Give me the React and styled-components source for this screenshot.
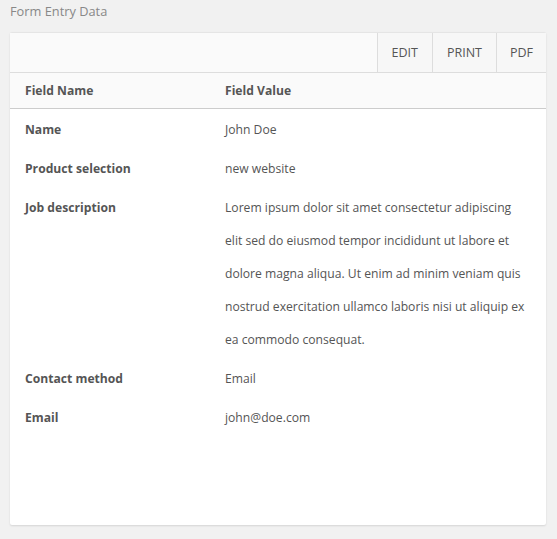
import React from 'react'
import styled, { createGlobalStyle } from 'styled-components'

const GlobalStyle = createGlobalStyle`
  html, body {
    margin: 0;
    padding: 0;
    background: #f1f1f1;
  }
  body {
    font-family: "Open Sans", "Noto Sans", sans-serif;
    font-size: 12.15px;
    color: #555;
  }
`

const entries = [
  { name: 'Name', value: 'John Doe' },
  { name: 'Product selection', value: 'new website' },
  {
    name: 'Job description',
    value:
      'Lorem ipsum dolor sit amet consectetur adipiscing elit sed do eiusmod tempor incididunt ut labore et dolore magna aliqua. Ut enim ad minim veniam quis nostrud exercitation ullamco laboris nisi ut aliquip ex ea commodo consequat.',
  },
  { name: 'Contact method', value: 'Email' },
  { name: 'Email', value: 'john@doe.com' },
]

function App() {
  return (
    <Page>
      <GlobalStyle />
      <Title>Form Entry Data</Title>
      <Card>
        <Toolbar>
          <ToolButton>EDIT</ToolButton>
          <ToolButton>PRINT</ToolButton>
          <ToolButton>PDF</ToolButton>
        </Toolbar>
        <HeadRow>
          <HeadCell>Field Name</HeadCell>
          <HeadCell>Field Value</HeadCell>
        </HeadRow>
        <Body>
          {entries.map((e) => (
            <Row key={e.name}>
              <NameCell>{e.name}</NameCell>
              <ValueCell>{e.value}</ValueCell>
            </Row>
          ))}
        </Body>
      </Card>
    </Page>
  )
}

const Page = styled.div`
  padding: 0 11px 14px 10px;
`

const Title = styled.h2`
  margin: 0;
  padding: 2px 0 0 0;
  height: 30px;
  line-height: 18px;
  font-size: 12.8px;
  font-weight: 400;
  color: #888;
`

const Card = styled.div`
  background: #fff;
  border-radius: 2px;
  box-shadow: 0 1px 2px rgba(0, 0, 0, 0.12);
  border-top: 1px solid #e5e5e5;
  min-height: 493px;
  box-sizing: border-box;
`

const Toolbar = styled.div`
  display: flex;
  justify-content: flex-end;
  height: 39px;
  background: #fafafa;
  border-bottom: 1px solid #ddd;
`

const ToolButton = styled.button`
  border: none;
  border-left: 1px solid #ddd;
  background: #f7f7f7;
  color: #555;
  font-family: inherit;
  font-size: 12.5px;
  padding: 0 14px;
  cursor: pointer;
  &:last-child {
    padding: 0 13px 0 13px;
  }
`

const HeadRow = styled.div`
  display: grid;
  grid-template-columns: 200px 1fr;
  height: 35px;
  align-items: center;
  padding: 0 15px;
  background: #fafafa;
  border-bottom: 1px solid #ccc;
`

const HeadCell = styled.div`
  font-weight: 700;
  color: #555;
`

const Body = styled.div`
  padding-top: 1px;
`

const Row = styled.div`
  display: grid;
  grid-template-columns: 200px 1fr;
  padding: 3px 17px 3px 15px;
  line-height: 33px;
`

const NameCell = styled.div`
  font-weight: 700;
`

const ValueCell = styled.div`
  padding-right: 0;
`

export default App
